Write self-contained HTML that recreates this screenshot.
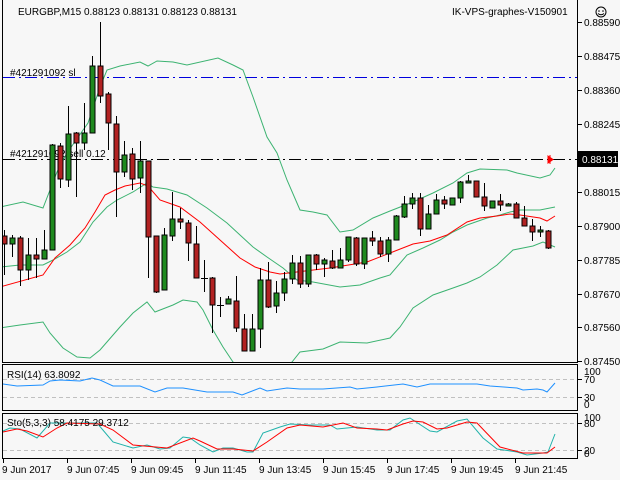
<!DOCTYPE html>
<html><head><meta charset="utf-8"><style>
html,body{margin:0;padding:0;background:#f7f7f7;}
svg{display:block;font-family:"Liberation Sans",sans-serif;font-size:10px;}
</style></head><body>
<svg width="620" height="480" viewBox="0 0 620 480" xmlns="http://www.w3.org/2000/svg">
<rect width="620" height="480" fill="#f7f7f7"/>
<!-- main panel -->
<g shape-rendering="crispEdges">
<line x1="2.5" y1="0" x2="2.5" y2="362" stroke="#000"/>
<line x1="577.5" y1="0" x2="577.5" y2="362" stroke="#000"/>
<line x1="2" y1="362.5" x2="578" y2="362.5" stroke="#000"/>
<rect x="2.5" y="364.5" width="575" height="46" fill="none" stroke="#000"/>
<rect x="2.5" y="413.5" width="575" height="45" fill="none" stroke="#000"/>
</g>
<!-- order lines -->
<line x1="3" y1="77.5" x2="577" y2="77.5" stroke="#0000dd" stroke-dasharray="12,4,2,4" shape-rendering="crispEdges"/>
<line x1="3" y1="159.5" x2="577" y2="159.5" stroke="#000" stroke-dasharray="12,4,2,4" shape-rendering="crispEdges"/>
<text x="10" y="76" fill="#000">#421291092 sl</text>
<text x="10" y="157" fill="#000">#421291092 sell 0.12</text>
<text x="18" y="15" fill="#000">EURGBP,M15  0.88123 0.88131 0.88123 0.88131</text>
<text x="452" y="15" fill="#000">IK-VPS-graphes-V150901</text>
<circle cx="601" cy="12" r="5" fill="none" stroke="#000"/>
<circle cx="599" cy="11" r="0.8" fill="#000"/><circle cx="603" cy="11" r="0.8" fill="#000"/>
<path d="M598 13.5 Q601 16 604 13.5" fill="none" stroke="#000"/>
<defs><clipPath id="mc"><rect x="3" y="0" width="574" height="362"/></clipPath></defs>
<g clip-path="url(#mc)" fill="none" stroke-width="1">
<!-- bollinger upper -->
<polyline stroke="#3cb371" points="0,207 23,202 43,208 50,190 57,172 67,153 88,123 100,87 107,70 120,66 140,62 148,66 157,61 173,62 187,65 218,58 233,65 243,70 253,97 267,137 277,153 287,180 300,210 313,212 327,215 340,232 353,230 373,218 390,211 413,202 433,193 453,183 467,173 480,169 507,170 517,173 540,178 550,175 555,168"/>
<!-- middle -->
<polyline stroke="#3cb371" points="0,267 20,265 43,265 53,260 67,252 80,242 93,222 107,207 117,200 133,192 147,183 153,187 167,189 187,195 207,208 227,223 240,235 253,247 267,257 283,268 297,280 313,282 340,287 360,285 380,278 390,275 407,255 423,248 440,240 453,232 467,225 487,218 500,215 510,212 520,210 540,210 555,207"/>
<!-- lower -->
<polyline stroke="#3cb371" points="0,328 20,325 43,322 50,333 63,348 77,357 90,358 100,350 120,327 133,313 147,302 155,312 173,305 183,300 197,302 203,310 213,330 223,347 233,362 245,372 280,372 292,362 300,352 323,349 340,342 367,343 390,338 400,327 413,308 433,295 453,288 467,283 480,277 497,265 513,250 533,246 543,242 555,247"/>
<!-- MA red -->
<polyline stroke="#ff0000" points="0,287 43,275 55,258 70,245 85,228 95,212 105,195 115,190 125,186 140,183 148,186 160,200 180,207 200,222 220,240 240,258 255,267 270,272 280,274 330,268 367,262 390,253 413,244 430,241 447,235 467,222 480,218 497,216 510,214 520,215 540,218 547,221 555,216"/>
</g>
<g stroke="#000" shape-rendering="crispEdges" clip-path="url(#mc)">
<g id="c">
<line x1="4.5" y1="230" x2="4.5" y2="275"/><rect x="2" y="236" width="5" height="8" fill="#b22222"/>
<line x1="12.5" y1="235" x2="12.5" y2="257"/><rect x="10" y="238" width="5" height="6" fill="#1f8a1f"/>
<line x1="20.5" y1="236" x2="20.5" y2="286"/><rect x="18" y="238" width="5" height="32" fill="#b22222"/>
<line x1="28.5" y1="238" x2="28.5" y2="280"/><rect x="26" y="255" width="5" height="15" fill="#1f8a1f"/>
<line x1="36.5" y1="238" x2="36.5" y2="278"/><rect x="34" y="255" width="5" height="4" fill="#b22222"/>
<line x1="44.5" y1="230" x2="44.5" y2="259"/><rect x="42" y="250" width="5" height="9" fill="#1f8a1f"/>
<line x1="52.5" y1="144" x2="52.5" y2="250"/><rect x="50" y="145" width="5" height="105" fill="#1f8a1f"/>
<line x1="60.5" y1="143" x2="60.5" y2="188"/><rect x="58" y="146" width="5" height="33" fill="#b22222"/>
<line x1="68.5" y1="106" x2="68.5" y2="187"/><rect x="66" y="134" width="5" height="46" fill="#1f8a1f"/>
<line x1="76.5" y1="132" x2="76.5" y2="197"/><rect x="74" y="133" width="5" height="10" fill="#b22222"/>
<line x1="84.5" y1="103" x2="84.5" y2="150"/><rect x="82" y="133" width="5" height="10" fill="#1f8a1f"/>
<line x1="92.5" y1="56" x2="92.5" y2="133"/><rect x="90" y="66" width="5" height="67" fill="#1f8a1f"/>
<line x1="100.5" y1="22" x2="100.5" y2="103"/><rect x="98" y="66" width="5" height="30" fill="#b22222"/>
<line x1="108.5" y1="92" x2="108.5" y2="150"/><rect x="106" y="94" width="5" height="29" fill="#b22222"/>
<line x1="116.5" y1="116" x2="116.5" y2="217"/><rect x="114" y="124" width="5" height="48" fill="#b22222"/>
<line x1="124.5" y1="141" x2="124.5" y2="177"/><rect x="122" y="155" width="5" height="17" fill="#1f8a1f"/>
<line x1="132.5" y1="148" x2="132.5" y2="190"/><rect x="130" y="154" width="5" height="25" fill="#b22222"/>
<line x1="140.5" y1="141" x2="140.5" y2="193"/><rect x="138" y="161" width="5" height="17" fill="#1f8a1f"/>
<line x1="148.5" y1="161" x2="148.5" y2="278"/><rect x="146" y="161" width="5" height="76" fill="#b22222"/>
<line x1="156.5" y1="236" x2="156.5" y2="293"/><rect x="154" y="236" width="5" height="56" fill="#b22222"/>
<line x1="164.5" y1="228" x2="164.5" y2="290"/><rect x="162" y="235" width="5" height="55" fill="#1f8a1f"/>
<line x1="172.5" y1="192" x2="172.5" y2="241"/><rect x="170" y="219" width="5" height="17" fill="#1f8a1f"/>
<line x1="180.5" y1="208" x2="180.5" y2="229"/><rect x="178" y="219" width="5" height="3" fill="#b22222"/>
<line x1="188.5" y1="220" x2="188.5" y2="261"/><rect x="186" y="223" width="5" height="20" fill="#b22222"/>
<line x1="196.5" y1="226" x2="196.5" y2="278"/><rect x="194" y="244" width="5" height="34" fill="#b22222"/>
<line x1="204.5" y1="260" x2="204.5" y2="292"/><line x1="201" y1="278.5" x2="208" y2="278.5"/>
<line x1="212.5" y1="277" x2="212.5" y2="333"/><rect x="210" y="278" width="5" height="27" fill="#b22222"/>
<line x1="220.5" y1="297" x2="220.5" y2="317"/><line x1="217" y1="305.5" x2="224" y2="305.5"/>
<line x1="228.5" y1="296" x2="228.5" y2="304"/><rect x="226" y="299" width="5" height="5" fill="#1f8a1f"/>
<line x1="236.5" y1="276" x2="236.5" y2="332"/><rect x="234" y="301" width="5" height="27" fill="#b22222"/>
<line x1="244.5" y1="314" x2="244.5" y2="351"/><rect x="242" y="329" width="5" height="22" fill="#b22222"/>
<line x1="252.5" y1="314" x2="252.5" y2="351"/><rect x="250" y="329" width="5" height="22" fill="#1f8a1f"/>
<line x1="260.5" y1="268" x2="260.5" y2="348"/><rect x="258" y="280" width="5" height="49" fill="#1f8a1f"/>
<line x1="268.5" y1="262" x2="268.5" y2="308"/><rect x="266" y="280" width="5" height="27" fill="#b22222"/>
<line x1="276.5" y1="281" x2="276.5" y2="313"/><rect x="274" y="293" width="5" height="13" fill="#1f8a1f"/>
<line x1="284.5" y1="272" x2="284.5" y2="301"/><rect x="282" y="279" width="5" height="14" fill="#1f8a1f"/>
<line x1="292.5" y1="255" x2="292.5" y2="284"/><rect x="290" y="263" width="5" height="16" fill="#1f8a1f"/>
<line x1="300.5" y1="256" x2="300.5" y2="288"/><rect x="298" y="263" width="5" height="21" fill="#b22222"/>
<line x1="308.5" y1="255" x2="308.5" y2="287"/><rect x="306" y="255" width="5" height="29" fill="#1f8a1f"/>
<line x1="316.5" y1="254" x2="316.5" y2="270"/><rect x="314" y="255" width="5" height="9" fill="#b22222"/>
<line x1="324.5" y1="258" x2="324.5" y2="277"/><rect x="322" y="260" width="5" height="4" fill="#1f8a1f"/>
<line x1="332.5" y1="250" x2="332.5" y2="269"/><rect x="330" y="261" width="5" height="7" fill="#b22222"/>
<line x1="340.5" y1="248" x2="340.5" y2="268"/><rect x="338" y="260" width="5" height="8" fill="#1f8a1f"/>
<line x1="348.5" y1="237" x2="348.5" y2="262"/><rect x="346" y="237" width="5" height="23" fill="#1f8a1f"/>
<line x1="356.5" y1="237" x2="356.5" y2="266"/><rect x="354" y="238" width="5" height="26" fill="#b22222"/>
<line x1="364.5" y1="238" x2="364.5" y2="269"/><rect x="362" y="238" width="5" height="26" fill="#1f8a1f"/>
<line x1="372.5" y1="231" x2="372.5" y2="246"/><rect x="370" y="238" width="5" height="3" fill="#b22222"/>
<line x1="380.5" y1="237" x2="380.5" y2="257"/><rect x="378" y="241" width="5" height="13" fill="#b22222"/>
<line x1="388.5" y1="237" x2="388.5" y2="262"/><rect x="386" y="240" width="5" height="14" fill="#1f8a1f"/>
<line x1="396.5" y1="215" x2="396.5" y2="240"/><rect x="394" y="216" width="5" height="24" fill="#1f8a1f"/>
<line x1="404.5" y1="196" x2="404.5" y2="218"/><rect x="402" y="204" width="5" height="13" fill="#1f8a1f"/>
<line x1="412.5" y1="193" x2="412.5" y2="209"/><rect x="410" y="198" width="5" height="6" fill="#1f8a1f"/>
<line x1="420.5" y1="193" x2="420.5" y2="236"/><rect x="418" y="198" width="5" height="31" fill="#b22222"/>
<line x1="428.5" y1="205" x2="428.5" y2="229"/><rect x="426" y="214" width="5" height="15" fill="#1f8a1f"/>
<line x1="436.5" y1="194" x2="436.5" y2="214"/><rect x="434" y="200" width="5" height="14" fill="#1f8a1f"/>
<line x1="444.5" y1="196" x2="444.5" y2="209"/><rect x="442" y="200" width="5" height="4" fill="#b22222"/>
<line x1="452.5" y1="198" x2="452.5" y2="205"/><rect x="450" y="198" width="5" height="7" fill="#1f8a1f"/>
<line x1="460.5" y1="181" x2="460.5" y2="203"/><rect x="458" y="182" width="5" height="16" fill="#1f8a1f"/>
<line x1="468.5" y1="175" x2="468.5" y2="183"/><rect x="466" y="181" width="5" height="2" fill="#1f8a1f"/>
<line x1="476.5" y1="181" x2="476.5" y2="197"/><rect x="474" y="181" width="5" height="16" fill="#b22222"/>
<line x1="484.5" y1="183" x2="484.5" y2="211"/><rect x="482" y="197" width="5" height="9" fill="#b22222"/>
<line x1="492.5" y1="201" x2="492.5" y2="208"/><rect x="490" y="201" width="5" height="7" fill="#1f8a1f"/>
<line x1="500.5" y1="194" x2="500.5" y2="211"/><rect x="498" y="201" width="5" height="4" fill="#b22222"/>
<line x1="508.5" y1="203" x2="508.5" y2="206"/><rect x="506" y="204" width="5" height="2" fill="#1f8a1f"/>
<line x1="516.5" y1="202" x2="516.5" y2="218"/><rect x="514" y="204" width="5" height="14" fill="#b22222"/>
<line x1="524.5" y1="206" x2="524.5" y2="226"/><rect x="522" y="218" width="5" height="8" fill="#b22222"/>
<line x1="532.5" y1="219" x2="532.5" y2="241"/><rect x="530" y="226" width="5" height="6" fill="#b22222"/>
<line x1="540.5" y1="226" x2="540.5" y2="237"/><rect x="538" y="230" width="5" height="2" fill="#1f8a1f"/>
<line x1="548.5" y1="230" x2="548.5" y2="249"/><rect x="546" y="231" width="5" height="17" fill="#b22222"/>
</g>
</g>
<!-- red arrow -->
<path d="M548 156 L553 159.5 L548 163 Z M550 155 L550 164" fill="#ff0000" stroke="#ff0000"/>
<!-- price axis -->
<g stroke="#000" shape-rendering="crispEdges">
<line x1="578" y1="22.5" x2="582" y2="22.5"/><line x1="578" y1="56.5" x2="582" y2="56.5"/>
<line x1="578" y1="90.5" x2="582" y2="90.5"/><line x1="578" y1="124.5" x2="582" y2="124.5"/>
<line x1="578" y1="192.5" x2="582" y2="192.5"/><line x1="578" y1="226.5" x2="582" y2="226.5"/>
<line x1="578" y1="260.5" x2="582" y2="260.5"/><line x1="578" y1="294.5" x2="582" y2="294.5"/>
<line x1="578" y1="327.5" x2="582" y2="327.5"/><line x1="578" y1="361.5" x2="582" y2="361.5"/>
</g>
<g fill="#000">
<text x="584" y="26">0.88590</text><text x="584" y="60">0.88475</text>
<text x="584" y="94">0.88360</text><text x="584" y="128">0.88245</text>
<text x="584" y="196">0.88015</text><text x="584" y="230">0.87900</text>
<text x="584" y="264">0.87785</text><text x="584" y="298">0.87670</text>
<text x="584" y="331">0.87560</text><text x="584" y="365">0.87450</text>
</g>
<rect x="578" y="151" width="40" height="16" fill="#000"/>
<text x="582" y="163" fill="#fff">0.88131</text>
<!-- RSI -->
<g stroke="#c0c0c0" stroke-dasharray="4,3" shape-rendering="crispEdges">
<line x1="3" y1="379.5" x2="577" y2="379.5"/><line x1="3" y1="397.5" x2="577" y2="397.5"/>
<line x1="3" y1="423.5" x2="577" y2="423.5"/><line x1="3" y1="450.5" x2="577" y2="450.5"/>
</g>
<polyline fill="none" stroke="#1e90ff" points="3,384 17,386 43,385 50,381 60,380 80,381 92,378 100,380 113,386 140,386 155,392 167,388 183,388 207,392 233,392 242,395 260,388 267,391 287,388 300,389 323,389 350,387 357,389 377,387 403,384 417,387 430,384 457,384 477,384 490,386 517,388 523,390 537,389 543,390 547,392 555,383"/>
<text x="7" y="378" fill="#000">RSI(14) 63.8092</text>
<!-- Stoch -->
<polyline fill="none" stroke="#20b2aa" points="3,431 10,428 20,429 37,438 50,423 73,423 97,423 113,442 133,448 147,445 160,449 170,448 183,437 190,438 200,445 213,452 223,448 233,448 247,452 253,452 263,433 280,427 290,424 310,425 330,425 337,429 357,427 377,430 390,430 403,420 410,418 430,431 437,432 457,421 467,419 483,438 497,449 517,452 527,455 543,453 548,452 555,434"/>
<polyline fill="none" stroke="#ff0000" points="3,432 17,429 27,431 43,437 57,428 67,423 100,424 113,430 133,445 167,448 193,438 200,441 217,449 233,449 253,451 267,442 287,428 300,425 323,427 343,423 357,428 377,429 387,430 403,424 413,421 423,422 437,429 447,428 467,422 477,423 500,447 523,453 547,453 555,447"/>
<text x="7" y="426" fill="#000">Sto(5,3,3) 58.4175 29.3712</text>
<g fill="#000">
<text x="584" y="375">100</text><text x="584" y="383">70</text>
<text x="584" y="401">30</text><text x="584" y="408">0</text>
<text x="584" y="421">100</text><text x="584" y="427">80</text>
<text x="584" y="454">20</text><text x="584" y="457">0</text>
</g>
<g stroke="#000" shape-rendering="crispEdges">
<line x1="578" y1="379.5" x2="582" y2="379.5"/><line x1="578" y1="397.5" x2="582" y2="397.5"/>
<line x1="578" y1="423.5" x2="582" y2="423.5"/><line x1="578" y1="450.5" x2="582" y2="450.5"/>
<line x1="3.5" y1="459" x2="3.5" y2="463"/><line x1="67.5" y1="459" x2="67.5" y2="463"/>
<line x1="131.5" y1="459" x2="131.5" y2="463"/><line x1="195.5" y1="459" x2="195.5" y2="463"/>
<line x1="259.5" y1="459" x2="259.5" y2="463"/><line x1="323.5" y1="459" x2="323.5" y2="463"/>
<line x1="387.5" y1="459" x2="387.5" y2="463"/><line x1="451.5" y1="459" x2="451.5" y2="463"/>
<line x1="515.5" y1="459" x2="515.5" y2="463"/>
</g>
<g fill="#000">
<text x="2" y="473">9 Jun 2017</text><text x="67" y="473">9 Jun 07:45</text>
<text x="131" y="473">9 Jun 09:45</text><text x="195" y="473">9 Jun 11:45</text>
<text x="259" y="473">9 Jun 13:45</text><text x="323" y="473">9 Jun 15:45</text>
<text x="387" y="473">9 Jun 17:45</text><text x="451" y="473">9 Jun 19:45</text>
<text x="515" y="473">9 Jun 21:45</text>
</g>
</svg>
</body></html>
